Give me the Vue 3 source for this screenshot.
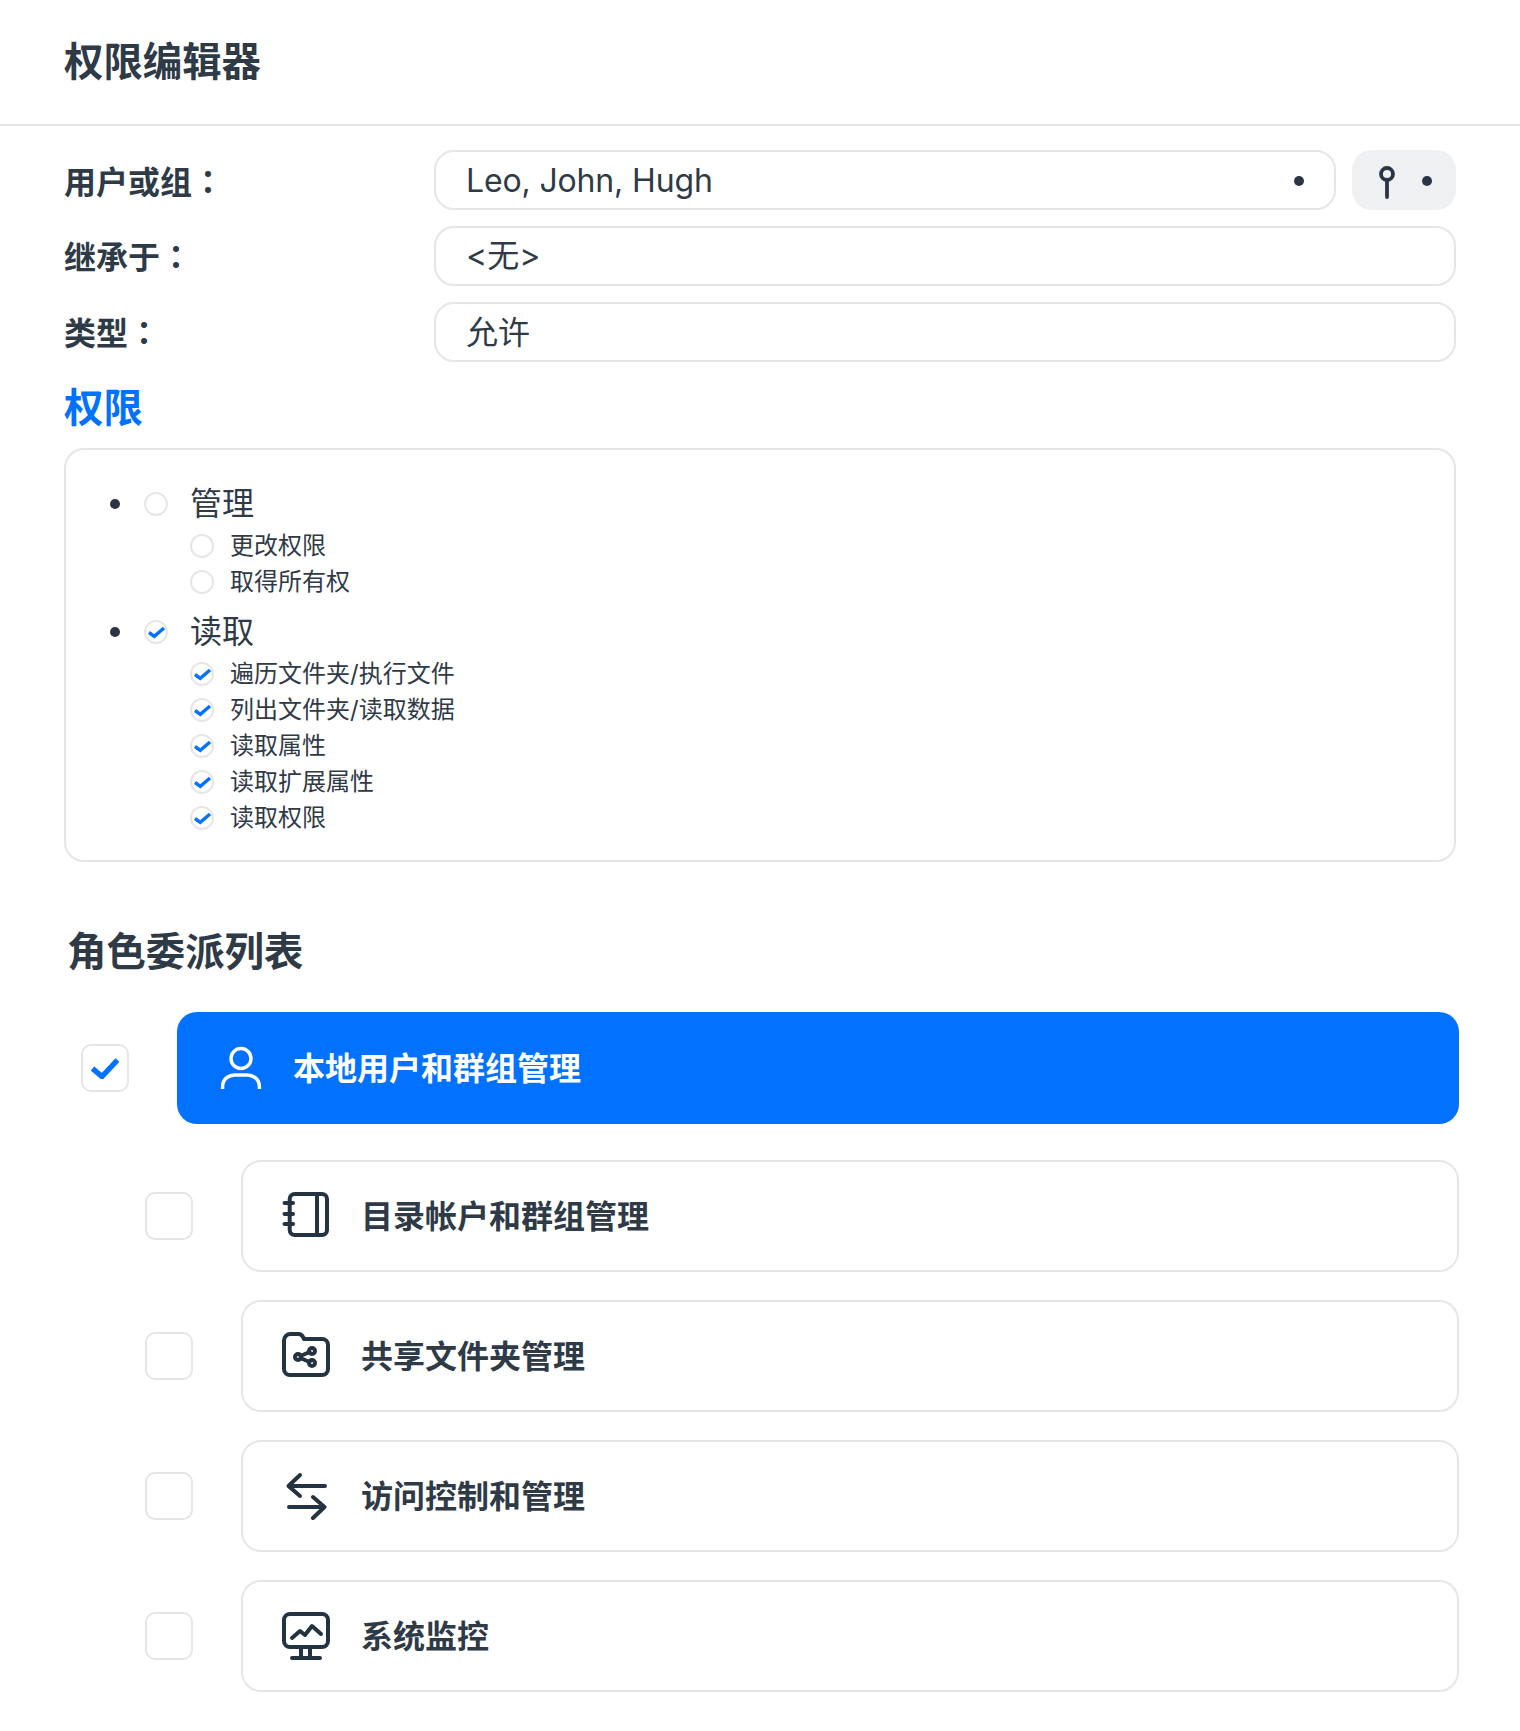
<script setup>
const groups = [
  { name: '管理', checked: false, items: ['更改权限', '取得所有权'] },
  { name: '读取', checked: true, items: ['遍历文件夹/执行文件', '列出文件夹/读取数据', '读取属性', '读取扩展属性', '读取权限'] },
]
const roles = ['目录帐户和群组管理', '共享文件夹管理', '访问控制和管理', '系统监控']
</script>

<template>
  <div class="page">
    <header class="top"><h1 class="title">权限编辑器</h1></header>
    <section class="form">
      <div class="row">
        <label class="label">用户或组<span class="colon">：</span></label>
        <div class="with-btn">
          <div class="input grow">
            <span class="latin">Leo, John, Hugh</span>
            <i class="dot"></i>
          </div>
          <button class="pick">
            <svg width="24" height="48" viewBox="0 0 24 48" class="pin"><circle cx="12" cy="14" r="6" fill="none" stroke="#2a3644" stroke-width="3.8"/><path d="M12 20v17" stroke="#2a3644" stroke-width="3.8" stroke-linecap="round"/></svg>
            <i class="dot"></i>
          </button>
        </div>
      </div>
      <div class="row">
        <label class="label">继承于<span class="colon">：</span></label>
        <div class="input"><span class="val">&lt;无&gt;</span></div>
      </div>
      <div class="row">
        <label class="label">类型<span class="colon">：</span></label>
        <div class="input"><span class="val low">允许</span></div>
      </div>
    </section>

    <h2 class="perm-title">权限</h2>
    <section class="perm-box">
      <div v-for="g in groups" :key="g.name" class="group">
        <div class="g-head">
          <i class="bullet"></i>
          <span class="circle" :class="{ on: g.checked }">
            <svg v-if="g.checked" width="24" height="24" viewBox="0 0 24 24"><path d="M5 12.500L10.300 16.300 20 8" fill="none" stroke="#0072ff" stroke-width="3.400"/></svg>
          </span>
          <span class="g-name">{{ g.name }}</span>
        </div>
        <div v-for="it in g.items" :key="it" class="sub">
          <span class="circle">
            <svg v-if="g.checked" width="24" height="24" viewBox="0 0 24 24"><path d="M5 12.500L10.300 16.300 20 8" fill="none" stroke="#0072ff" stroke-width="3.400"/></svg>
          </span>
          <span class="sub-name">{{ it }}</span>
        </div>
      </div>
    </section>

    <h2 class="role-title">角色委派列表</h2>
    <section class="roles">
      <div class="role first">
        <span class="check">
          <svg width="28" height="22" viewBox="0 0 28 22"><path d="M1.500 11.500l9.500 8L26.500 3" fill="none" stroke="#0072ff" stroke-width="5.400"/></svg>
        </span>
        <div class="card active">
          <svg class="ico-u" width="42" height="44" viewBox="0 0 42 44" fill="none" stroke="#fff" stroke-width="3.400">
            <circle cx="21" cy="12.500" r="10"/>
            <path d="M2.600 43v-2.500C2.600 33.500 8 29 15 29h12c7 0 12.400 4.500 12.400 11.500V43"/>
          </svg>
          <span class="c-text">本地用户和群组管理</span>
        </div>
      </div>
      <div v-for="(r, i) in roles" :key="r" class="role">
        <span class="check"></span>
        <div class="card">
          <span class="ico">
            <svg v-if="i === 0" width="48" height="48" viewBox="0 0 48 48" fill="none" stroke="#243342" stroke-width="4" stroke-linecap="round" stroke-linejoin="round">
              <rect x="7.700" y="2" width="37.300" height="41" rx="5"/>
              <path d="M35 2v41M2.500 11h8.500M2.500 22h8.500M2.500 32h8.500"/>
            </svg>
            <svg v-else-if="i === 1" width="48" height="48" viewBox="0 0 48 48" fill="none" stroke="#243342" stroke-width="4" stroke-linecap="round" stroke-linejoin="round">
              <path d="M2 8.500A6.500 6.500 0 0 1 8.500 2h8c2 0 3.500 1 4.500 3l1 2h18a6 6 0 0 1 6 6v24a6 6 0 0 1-6 6H8a6 6 0 0 1-6-6z"/>
              <circle cx="16" cy="25" r="3"/><circle cx="30" cy="19" r="3"/><circle cx="30" cy="31" r="3"/>
              <path d="M18.500 24l9-4M18.500 26l9 4"/>
            </svg>
            <svg v-else-if="i === 2" width="48" height="48" viewBox="0 0 48 48" fill="none" stroke="#243342" stroke-width="4" stroke-linecap="round" stroke-linejoin="round">
              <path d="M7 14h36M18 3L6.500 14 18 24"/>
              <path d="M7 35h35M31 25l11.500 10L31 46"/>
            </svg>
            <svg v-else width="48" height="48" viewBox="0 0 48 48" fill="none" stroke="#243342" stroke-width="4" stroke-linecap="round" stroke-linejoin="round">
              <rect x="2" y="2" width="44" height="33" rx="6"/>
              <path d="M10 26l8-7 5 4 7-9 9 8M19 35v11M28 35v11M10 46h28"/>
            </svg>
          </span>
          <span class="c-text">{{ r }}</span>
        </div>
      </div>
    </section>
  </div>
</template>

<style scoped>
.page { width: 1520px; height: 1731px; box-sizing: border-box; background: #fff; color: #2f3a47; font-family: Inter, "Noto Sans CJK SC", sans-serif; overflow: hidden; }
.top { height: 124px; box-sizing: content-box; border-bottom: 2px solid #e6e7e8; display: flex; align-items: center; padding-left: 64px; }
.title { margin: 0; font-size: 39.4px; font-weight: 700; line-height: 60px; }
.form { padding: 24px 64px 0; display: flex; flex-direction: column; gap: 16px; }
.row { display: flex; align-items: center; height: 60px; }
.label { width: 370px; flex: none; font-size: 32px; font-weight: 700; line-height: 48px; }
.colon { font-family: "Noto Sans CJK TC", sans-serif; }
.row:first-child .label { padding-top: 2px; }
.input { flex: 1; height: 60px; box-sizing: border-box; border: 2px solid #e6e6e6; border-radius: 20px; padding: 0 30px; font-size: 32px; line-height: 48px; display: flex; align-items: center; justify-content: space-between; }
.latin { letter-spacing: -0.15px; padding-top: 2px; }
.low { padding-top: 2px; }
.with-btn { flex: 1; display: flex; gap: 16px; }
.dot { width: 10px; height: 10px; border-radius: 50%; background: #2a3644; display: block; }
.grow .dot { margin-top: 2px; }
.pick { width: 104px; height: 60px; border: 0; border-radius: 20px; background: #eff0f2; padding: 0; position: relative; display: block; }
.pick .pin { position: absolute; left: 23px; top: 10px; }
.pick .dot { position: absolute; left: 70px; top: 26px; }
.perm-title { margin: 16px 0 10px; padding-left: 64px; color: #0072ff; font-size: 39.4px; font-weight: 700; line-height: 60px; }
.perm-box { margin: 0 64px; box-sizing: border-box; height: 414px; border: 2px solid #e6e6e6; border-radius: 20px; padding: 30px 0 0; }
.group + .group { margin-top: 8px; }
.g-head { height: 48px; display: flex; align-items: center; position: relative; padding-left: 78px; }
.bullet { position: absolute; left: 44px; top: 19px; width: 10px; height: 10px; border-radius: 50%; background: #2a3644; }
.g-name { margin-left: 22px; font-size: 32px; line-height: 48px; }
.circle { width: 24px; height: 24px; box-sizing: border-box; border: 2px solid #e6e6e6; border-radius: 50%; display: flex; align-items: center; justify-content: center; flex: none; }
.circle svg { flex: none; }
.sub { height: 36px; display: flex; align-items: center; padding-left: 124px; }
.sub-name { margin-left: 16px; font-size: 24px; line-height: 36px; }
.role-title { margin: 60px 0 30px; padding-left: 67px; font-size: 39.4px; font-weight: 700; line-height: 60px; }
.roles { display: flex; flex-direction: column; gap: 28px; padding: 0 61px 0 145px; }
.role { display: flex; align-items: center; gap: 48px; }
.role.first { margin-left: -64px; margin-bottom: 8px; }
.check { width: 48px; height: 48px; flex: none; box-sizing: border-box; border: 2px solid #e6e6e6; border-radius: 10px; display: flex; align-items: center; justify-content: center; }
.check svg { flex: none; }
.card { flex: 1; height: 112px; box-sizing: border-box; border: 2px solid #e6e6e6; border-radius: 20px; display: flex; align-items: center; padding-left: 39px; font-size: 32px; font-weight: 700; }
.c-text { line-height: 48px; padding-top: 2px; }
.ico { width: 48px; height: 48px; margin-right: 31px; display: block; }
.ico svg { display: block; }
.card.active { background: #0072ff; border: 0; color: #fff; padding-left: 43px; }
.ico-u { margin-right: 31px; }
</style>
